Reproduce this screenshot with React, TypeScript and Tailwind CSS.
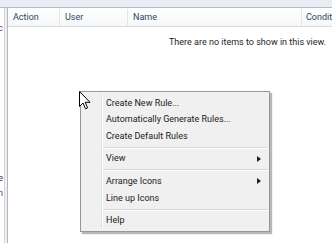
const font = { fontFamily: '"Segoe UI", Roboto, "Liberation Sans", sans-serif' };

function MenuItem({ label, sub }: { label: string; sub?: boolean }) {
  return (
    <div className="relative flex h-[16.5px] items-center pl-[25px] text-[9px] text-[#1b1b1b]">
      <span>{label}</span>
      {sub && (
        <span className="absolute right-[8px] top-1/2 -mt-[3.5px] h-0 w-0 border-y-[3.5px] border-l-[4px] border-y-transparent border-l-[#202020]" />
      )}
    </div>
  );
}

function Sep() {
  return (
    <div className="flex h-[6.3px] items-center pl-[22px] pr-[1px]">
      <div className="h-[2px] w-full border-t border-b border-t-[#d9d9d9] border-b-white" />
    </div>
  );
}

export default function App() {
  return (
    <div className="relative h-[243px] w-[332px] overflow-hidden bg-white" style={font}>
      <div className="h-[8px] border-b border-[#b7bac2] bg-[#e9ecf4]" />
      <div className="flex h-[235px]">
        {/* left pane, mostly cut off */}
        <div className="relative w-[4px] shrink-0 overflow-hidden text-[9px]">
          <span className="absolute right-[1px] top-[14px] text-[#8a2a6a]">c</span>
          <span className="absolute right-[1px] top-[164px] text-[#3a3a3a]">e</span>
          <span className="absolute right-[1px] top-[179px] text-[#4a3a8a]">n</span>
        </div>
        <div className="w-[4px] shrink-0 border-x border-l-[#d3d6db] border-r-[#b3b6bd] bg-[#eceef1]" />
        <div className="min-w-0 flex-1 overflow-hidden">
          <div className="flex h-[19px] border-b border-[#dcdcdc] bg-gradient-to-b from-white to-[#f6f7f9] pt-[1px] text-[9px] text-[#34445e]">
            <div className="flex w-[52px] shrink-0 items-center border-r border-[#e3e5e8] pl-[5px]">Action</div>
            <div className="flex w-[68px] shrink-0 items-center border-r border-[#e3e5e8] pl-[5px]">User</div>
            <div className="flex w-[174px] shrink-0 items-center border-r border-[#e3e5e8] pl-[5px]">Name</div>
            <div className="flex shrink-0 items-center whitespace-nowrap pl-[4px]">Condition</div>
          </div>
          <div className="whitespace-nowrap pl-[161px] pt-[9px] text-[9px] text-[#1e1e1e]">
            There are no items to show in this view.
          </div>
        </div>
      </div>

      {/* context menu */}
      <div className="absolute left-[80px] top-[91px] w-[190px] border border-[#979797] bg-[#f0f0f0] pb-[2px] pt-[3px] shadow-[2px_2px_1px_rgba(0,0,0,0.28)]">
        <div className="absolute bottom-[2px] left-[20px] top-[2px] w-[2px] border-l border-r border-l-[#e0e0e0] border-r-white" />
        <MenuItem label="Create New Rule..." />
        <MenuItem label="Automatically Generate Rules..." />
        <MenuItem label="Create Default Rules" />
        <Sep />
        <MenuItem label="View" sub />
        <Sep />
        <MenuItem label="Arrange Icons" sub />
        <MenuItem label="Line up Icons" />
        <Sep />
        <MenuItem label="Help" />
      </div>

      {/* mouse pointer */}
      <svg className="absolute left-[79px] top-[91px]" width="12" height="19" viewBox="0 0 12 19">
        <path
          d="M0.5 0.5 L0.5 15.5 L4 12 L6.5 17.8 L8.6 16.9 L6.2 11.3 L11 11.3 Z"
          fill="white"
          stroke="black"
          strokeWidth="1"
          strokeLinejoin="miter"
        />
      </svg>
    </div>
  );
}
